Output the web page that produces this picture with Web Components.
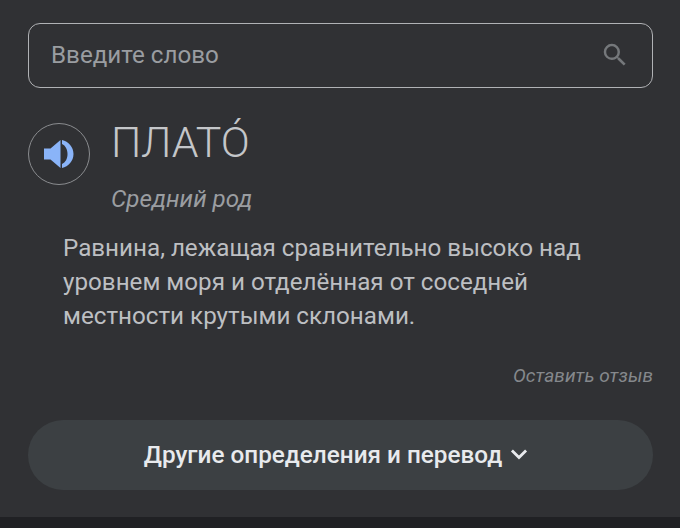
<!DOCTYPE html>
<html>
<head>
<meta charset="utf-8">
<style>
  html, body { margin: 0; padding: 0; background: #202124; }
  body { width: 680px; height: 528px; overflow: hidden; font-family: Roboto, "Noto Sans", sans-serif; }
</style>
</head>
<body>
<dict-card>
  <search-box placeholder="Введите слово"></search-box>
  <word-entry word="ПЛАТО́" kind="Средний род">Равнина, лежащая сравнительно высоко над уровнем моря и отделённая от соседней местности крутыми склонами.</word-entry>
  <feedback-link>Оставить отзыв</feedback-link>
  <more-button>Другие определения и перевод</more-button>
</dict-card>
<script>
class DictCard extends HTMLElement {
  constructor() {
    super();
    this.attachShadow({ mode: 'open' }).innerHTML = `
      <style>
        :host { display: block; box-sizing: border-box; height: 517px; padding: 23px 27px 0 28px; background: #303134; }
      </style>
      <slot></slot>`;
  }
}

class SearchBox extends HTMLElement {
  constructor() {
    super();
    this.attachShadow({ mode: 'open' }).innerHTML = `
      <style>
        :host { display: flex; box-sizing: border-box; height: 65px; align-items: center; justify-content: space-between; padding: 0 22px 1px 22px; border: 1.5px solid #b0b2b5; border-radius: 12px; }
        span { font-size: 24.2px; color: #9a9da1; }
        svg { display: block; width: 30px; height: 30px; fill: #75787b; }
      </style>
      <span></span>
      <svg viewBox="0 0 24 24"><path d="M15.5 14h-.79l-.28-.27A6.47 6.47 0 0 0 16 9.5 6.5 6.5 0 1 0 9.5 16c1.61 0 3.09-.59 4.23-1.57l.27.28v.79l5 4.99L20.49 19l-4.99-5zm-6 0C7.01 14 5 11.99 5 9.500S7.01 5 9.500 5 14 7.01 14 9.500 11.99 14 9.500 14z"/></svg>`;
    this.shadowRoot.querySelector('span').textContent = this.getAttribute('placeholder');
  }
}

class WordEntry extends HTMLElement {
  constructor() {
    super();
    this.attachShadow({ mode: 'open' }).innerHTML = `
      <style>
        :host { display: block; margin-top: 26px; }
        .head { display: flex; gap: 21px; }
        .sound { box-sizing: border-box; width: 62px; height: 62px; flex: none; margin-top: 9px; display: flex; align-items: center; justify-content: center; border: 1px solid #8a8c8f; border-radius: 50%; }
        .sound svg { display: block; width: 30px; height: 30px; }
        h1 { margin: 5px 0 0; font-size: 42.8px; line-height: 47px; font-weight: 300; color: #c4c6c9; }
        .kind { margin-top: 19px; font-size: 24.2px; line-height: 28px; font-style: italic; color: #9a9da1; }
        .def { margin: 18px 20px 0 35px; font-size: 24.2px; line-height: 34px; color: #bdbfc2; }
      </style>
      <div class="head">
        <div class="sound">
          <svg viewBox="0 0 30 30"><path fill="#8ab4f8" d="M0 9.500h6.500L16.500 1v28l-10-8.500H0z"/><path fill="#8ab4f8" d="M18 1c6.500 1.500 11.500 7 11.500 14S24.500 27.500 18 29v-4c3.500-1.500 5.500-5.500 5.500-10S21.500 6.500 18 5z"/></svg>
        </div>
        <div>
          <h1></h1>
          <div class="kind"></div>
        </div>
      </div>
      <div class="def"><slot></slot></div>`;
    this.shadowRoot.querySelector('h1').textContent = this.getAttribute('word');
    this.shadowRoot.querySelector('.kind').textContent = this.getAttribute('kind');
  }
}

class FeedbackLink extends HTMLElement {
  constructor() {
    super();
    this.attachShadow({ mode: 'open' }).innerHTML = `
      <style>
        :host { display: block; margin-top: 32px; text-align: right; font-size: 19.1px; line-height: 22px; font-style: italic; color: #85888c; }
      </style>
      <slot></slot>`;
  }
}

class MoreButton extends HTMLElement {
  constructor() {
    super();
    this.attachShadow({ mode: 'open' }).innerHTML = `
      <style>
        :host { display: flex; height: 70px; margin-top: 33px; padding-bottom: 2px; box-sizing: border-box; align-items: center; justify-content: center; gap: 1px; padding-right: 2px; border-radius: 35px; background: #3c4043; font-size: 24.3px; font-weight: 500; color: #e8eaed; }
        svg { display: block; width: 32px; height: 32px; fill: none; stroke: #e8eaed; stroke-width: 2.1; }
      </style>
      <slot></slot>
      <svg viewBox="0 0 24 24"><path d="M6.700 9.300 12 14.600l5.300-5.300"/></svg>`;
  }
}

customElements.define('dict-card', DictCard);
customElements.define('search-box', SearchBox);
customElements.define('word-entry', WordEntry);
customElements.define('feedback-link', FeedbackLink);
customElements.define('more-button', MoreButton);
</script>
</body>
</html>
